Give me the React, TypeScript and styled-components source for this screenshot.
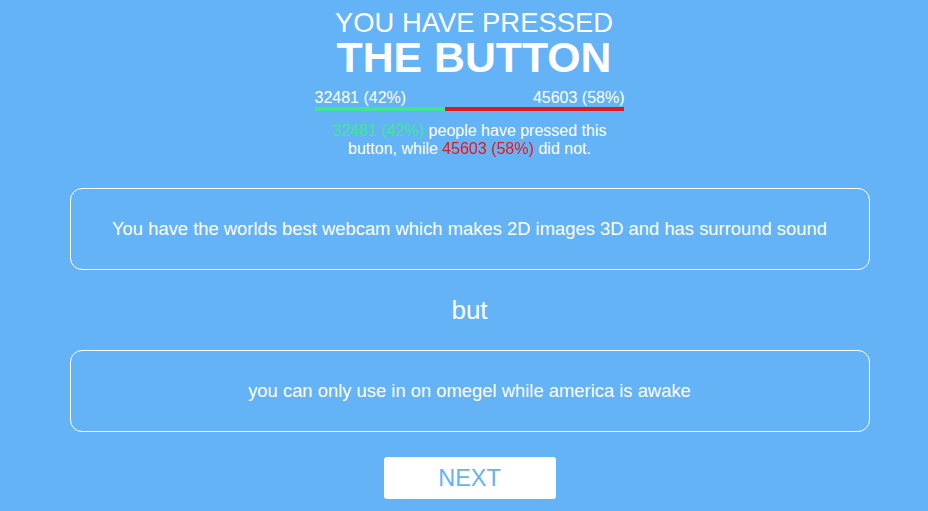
import React from "react";
import styled, { createGlobalStyle } from "styled-components";

const Global = createGlobalStyle`
  html, body { margin: 0; padding: 0; background: #64b3f7; }
  body { font-family: "Liberation Sans", Arial, sans-serif; color: #fff; }
`;

const Page = styled.div`
  width: 928px;
  height: 511px;
  box-sizing: border-box;
  padding-left: 11px;
  padding-top: 8px;
  display: flex;
  flex-direction: column;
  align-items: center;
  overflow: hidden;
`;

const Title = styled.h1`
  margin: 0;
  font-weight: normal;
  text-align: center;
  line-height: 1;
`;

const TitleTop = styled.div`
  font-size: 27.4px;
  line-height: 30px;
  padding-left: 9px;
`;

const TitleMain = styled.div`
  font-size: 42.8px;
  font-weight: bold;
  line-height: 38px;
  padding-left: 9px;
`;

const Stats = styled.div`
  width: 310px;
  margin-top: 13px;
`;

const Labels = styled.div`
  display: flex;
  justify-content: space-between;
  font-size: 16px;
  line-height: 18px;
`;

const Bar = styled.div`
  display: flex;
  height: 4px;
`;

const Segment = styled.div<{ $color: string }>`
  background: ${(p) => p.$color};
  height: 100%;
`;

const Desc = styled.p`
  margin: 11px 0 0;
  text-align: center;
  font-size: 16px;
  line-height: 18px;
`;

const Green = styled.span`
  color: #3ee88f;
`;

const Red = styled.span`
  color: #e0191a;
`;

const Card = styled.div`
  width: 800px;
  height: 82px;
  box-sizing: border-box;
  border: 1px solid #fff;
  border-radius: 12px;
  display: flex;
  align-items: center;
  justify-content: center;
  font-size: 18.4px;
  text-align: center;
`;

const FirstCard = styled(Card)`
  margin-top: 30px;
`;

const But = styled.div`
  font-size: 26px;
  line-height: 80px;
  height: 80px;
`;

const NextButton = styled.button`
  margin-top: 25px;
  width: 172px;
  height: 42px;
  border: none;
  border-radius: 3px;
  background: #fff;
  color: #64b3f7;
  font-family: "Liberation Sans", Arial, sans-serif;
  font-size: 23.5px;
  cursor: pointer;
`;

const pressed = 32481;
const notPressed = 45603;
const total = pressed + notPressed;
const pct = Math.round((pressed / total) * 100);

export default function App() {
  return (
    <>
      <Global />
      <Page>
        <Title>
          <TitleTop>YOU HAVE PRESSED</TitleTop>
          <TitleMain>THE BUTTON</TitleMain>
        </Title>
        <Stats>
          <Labels>
            <span>32481 (42%)</span>
            <span>45603 (58%)</span>
          </Labels>
          <Bar>
            <Segment $color="#3ee88f" style={{ width: `${pct}%` }} />
            <Segment $color="#e0191a" style={{ width: `${100 - pct}%` }} />
          </Bar>
          <Desc>
            <Green>32481 (42%)</Green> people have pressed this button, while{" "}
            <Red>45603 (58%)</Red> did not.
          </Desc>
        </Stats>
        <FirstCard>
          You have the worlds best webcam which makes 2D images 3D and has surround sound
        </FirstCard>
        <But>but</But>
        <Card>you can only use in on omegel while america is awake</Card>
        <NextButton>NEXT</NextButton>
      </Page>
    </>
  );
}
